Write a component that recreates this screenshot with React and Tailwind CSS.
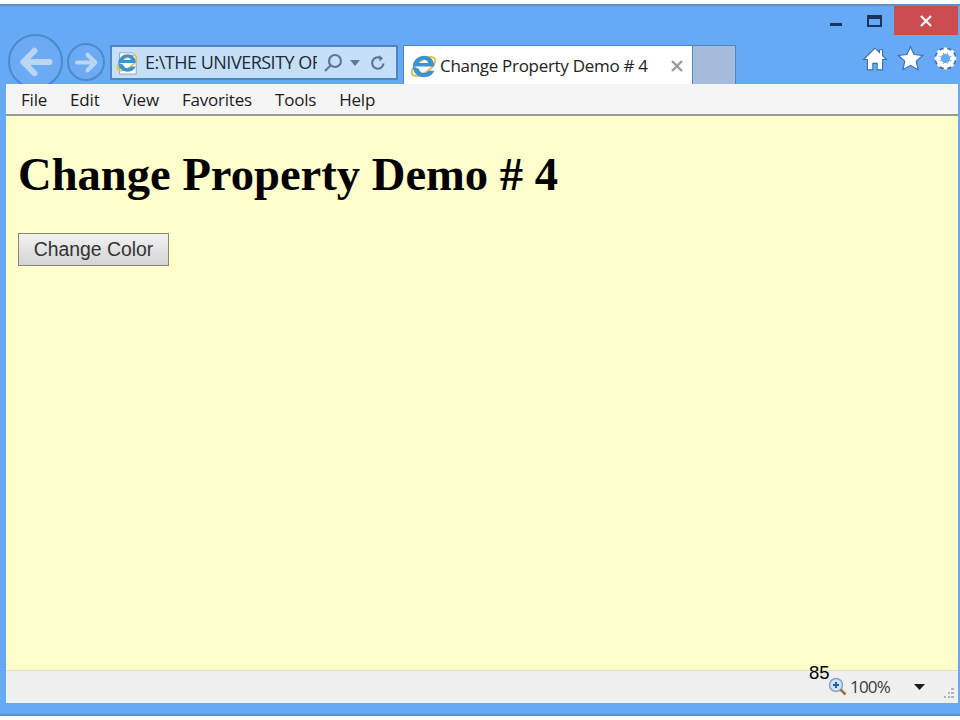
const ui = { fontFamily: '"Open Sans", "Noto Sans", sans-serif' }

function IeLogo({ size = 26, page = false }) {
  return (
    <svg width={size} height={size} viewBox={page ? '0 0 26 26' : '2 2 22 22'} fill="none">
      {page && <path d="M5 2h14l4 4v19H5z" fill="#fff" stroke="#8aa0b8" strokeWidth="1" />}
      <ellipse cx="13" cy="13" rx="12" ry="5.500" transform="rotate(-35 13 13)" stroke="#e3c453" strokeWidth="2" />
      <g transform="translate(13 13) scale(1.250) translate(-13 -13.500)">
        <path d="M5.500 13.500h15c.3-4.500-3-7.500-7-7.500s-8 3-8 7.500 3.500 7.500 8 7.500c3.500 0 6-1.700 7-4.500h-4c-.7 1-1.700 1.500-3 1.500-2 0-3.500-1.300-3.700-3zM9.800 11c.4-1.500 1.700-2.300 3.300-2.300s2.900.8 3.200 2.300z" fill="#3a93d2" fillRule="evenodd" />
      </g>
    </svg>
  )
}

function NavCircle({ size, iconSize, flip = false, className }) {
  return (
    <div className={`flex items-center justify-center rounded-full border-2 border-[#4d8ac9] bg-[#6cabf3] ${className}`} style={{ width: size, height: size }}>
      <svg width={iconSize} height={iconSize} viewBox="0 0 24 24" fill="none" stroke="#bcd5f0" strokeWidth="4" strokeLinejoin="round" strokeLinecap="round" className={flip ? 'rotate-180' : ''}>
        <path d="M21 12H4M11 4.500 3.500 12l7.500 7.500" />
      </svg>
    </div>
  )
}

export default function App() {
  return (
    <div className="h-[720px] w-[960px] overflow-hidden bg-white pt-[4px]">
      <div className="flex h-[712px] flex-col border-y-2 border-[#5f8fc4] bg-[#66a9f5] pl-[6px] pr-[2px]">
        {/* Title bar */}
        <div className="relative h-[78px] shrink-0">
          <div className="flex h-[30px] items-start justify-end">
            <div className="flex h-[20px] w-[26px] items-end justify-start">
              <div className="h-[3px] w-[12px] bg-[#16345c]" />
            </div>
            <div className="ml-[11px] mr-[12px] mt-[9px] h-[12px] w-[15px] border-2 border-t-[4px] border-[#16345c]" />
            <div className="flex h-[29px] w-[64px] items-center justify-center bg-[#cb4d4f]">
              <svg width="12" height="12" viewBox="0 0 12 12" stroke="#fff" strokeWidth="2.200"><path d="M1 1l10 10M11 1 1 11" /></svg>
            </div>
          </div>

          <div className="flex items-start pl-[2px]">
            {/* back button hangs below the bar, menu bar covers it */}
            <NavCircle size={55} iconSize={36} className="-mt-[2px] shrink-0" />
            <NavCircle size={38} iconSize={25} flip className="ml-[4px] mt-[7px] shrink-0" />
            <div className="ml-[5px] mt-[9px] flex h-[35px] w-[288px] items-center border-2 border-[#4f86c0] bg-[#c6dff8] pl-[3px] text-[#1e2a3a]" style={ui}>
              <IeLogo size={24} page />
              <span className="ml-[6px] w-[172px] overflow-hidden whitespace-nowrap text-[18px] tracking-[-0.5px]">E:\THE UNIVERSITY OF</span>
              <svg className="ml-[6px]" width="20" height="20" viewBox="0 0 20 20" fill="none" stroke="#5b7894" strokeWidth="2.200"><circle cx="12" cy="8" r="6" /><path d="M7.500 12.500 2 18" /></svg>
              <svg className="ml-[7px]" width="10" height="6" viewBox="0 0 10 6" fill="#5b7894"><path d="M0 0h10L5 6z" /></svg>
              <svg className="ml-[9px]" width="18" height="18" viewBox="0 0 18 18" fill="none" stroke="#5b7894" strokeWidth="2.200"><path d="M14.500 9.500a5.700 5.700 0 1 1-2.500-5.200" /><path d="M10 1l4 3.500-3.500 3" fill="#5b7894" stroke="none" /></svg>
            </div>
            <div className="ml-[5px] mt-[9px] flex h-[41px] w-[290px] items-center border-x border-t border-[#4f86c0] bg-white pl-[7px] text-[#222]" style={ui}>
              <IeLogo size={25} />
              <span className="ml-[4px] whitespace-nowrap text-[17px] tracking-[-0.3px]">Change Property Demo # 4</span>
              <svg className="ml-[23px]" width="12" height="12" viewBox="0 0 12 12" stroke="#9a9a9a" strokeWidth="2.400"><path d="M1 1l10 10M11 1 1 11" /></svg>
            </div>
            <div className="mt-[9px] h-[41px] w-[43px] border-r border-t border-[#4f86c0] bg-[#a5bcdc]" />
            <div className="ml-auto mt-[9px] flex items-center gap-[9px]">
              <svg width="26" height="26" viewBox="0 0 24 24" fill="#fff" stroke="#3b6ea8" strokeWidth="1"><path d="M12 2 1.500 12.500h3.500V22h5v-6h4v6h5v-9.500h3.500l-3.500-3.500V3.500h-3v2.500z" /></svg>
              <svg width="27" height="27" viewBox="0 0 24 24" fill="#fff" stroke="#3b6ea8" strokeWidth="1"><path d="m12 1.500 3.200 7 7.600.8-5.700 5.100 1.600 7.500-6.700-3.800-6.700 3.800 1.600-7.500L1.200 9.300l7.600-.8z" /></svg>
              <svg width="25" height="25" viewBox="0 0 24 24" fill="none"><circle cx="12" cy="12" r="7.500" stroke="#3b6ea8" strokeWidth="6" /><path d="M12 1.500v21M1.500 12h21M4.600 4.600l14.800 14.800M19.400 4.600 4.600 19.400" stroke="#fff" strokeWidth="3.500" /><circle cx="12" cy="12" r="7.500" stroke="#fff" strokeWidth="3.200" /><circle cx="12" cy="12" r="4.500" fill="#66a9f5" /></svg>
            </div>
          </div>
        </div>

        {/* Menu bar */}
        <div className="relative z-10 flex h-[32px] shrink-0 items-center gap-[23px] border-b-2 border-[#9a9a94] bg-[#f5f5f5] pl-[15px] pt-[2px] text-[17px] tracking-[-0.2px] text-[#1c1c1c]" style={ui}>
          <span>File</span>
          <span>Edit</span>
          <span>View</span>
          <span>Favorites</span>
          <span>Tools</span>
          <span>Help</span>
        </div>

        {/* Page */}
        <div className="min-h-0 flex-1 bg-[#ffffcc] pl-[12px] pt-[31px] text-black">
          <h1 className="whitespace-nowrap text-[46.600px] font-bold leading-[54px]" style={{ fontFamily: '"Liberation Serif", serif' }}>Change Property Demo # 4</h1>
          <button className="mt-[32px] block h-[33px] w-[151px] border border-[#85857a] bg-gradient-to-b from-[#f2f2f2] to-[#d4d4d4] text-[19.400px] text-[#333]" style={{ fontFamily: '"Liberation Sans", sans-serif' }}>Change Color</button>
        </div>

        {/* Status bar */}
        <div className="relative mb-[11px] flex h-[33px] shrink-0 items-center border-t border-[#deded0] bg-[#f0f0f0] pl-[822px] text-[#3c3c3c]" style={ui}>
          <span className="absolute left-[803px] top-[-12px] text-[18.500px] text-black" style={{ fontFamily: '"Liberation Sans", sans-serif' }}>85</span>
          <svg width="20" height="20" viewBox="0 0 20 20" fill="none"><circle cx="8" cy="8" r="6.500" fill="#cfe3f5" stroke="#8aa8c4" strokeWidth="1.500" /><path d="M8 5v6M5 8h6" stroke="#1d5fa8" strokeWidth="2" /><path d="m12.500 12.500 5 5" stroke="#a5703f" strokeWidth="2.500" /></svg>
          <span className="ml-[2px] text-[17px] tracking-[-0.8px]">100%</span>
          <svg className="ml-[24px]" width="11" height="6" viewBox="0 0 11 6" fill="#1c1c1c"><path d="M0 0h11L5.500 6z" /></svg>
          <svg className="ml-[19px] mt-[12px]" width="10" height="10" viewBox="0 0 10 10" fill="#b5b5b5"><path d="M7 0h3v2H7zM4 4h2v2H4zM7 4h3v2H7zM0 8h2v2H0zM4 8h2v2H4zM7 8h3v2H7z" /></svg>
        </div>
      </div>
    </div>
  )
}
